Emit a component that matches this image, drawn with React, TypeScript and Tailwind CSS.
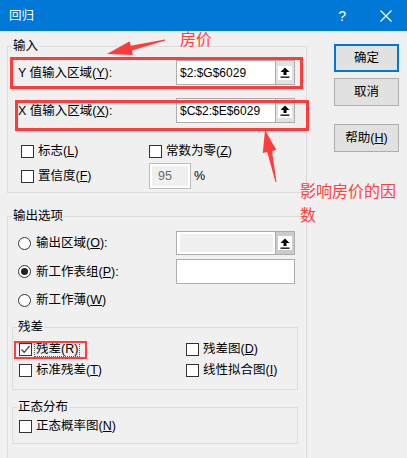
import { ReactNode } from "react";

const font = "font-['Liberation_Sans','Noto_Sans_CJK_SC',sans-serif]";

function UpArrow() {
    return (
        <div className="w-[14px] h-[14px] bg-white flex items-center justify-center">
            <svg width="10" height="11" viewBox="0 0 10 11">
                <path d="M5 0.5 L9.5 5 L6.5 5 L6.5 8 L3.5 8 L3.5 5 L0.5 5 Z" fill="#000" />
                <rect x="0.5" y="9.5" width="9" height="1.3" fill="#000" />
            </svg>
        </div>
    );
}

function RefInput({ value, disabled }: { value?: string; disabled?: boolean }) {
    return (
        <div className="flex w-[119px] h-full border border-[#adadad] bg-white">
            <div className="flex-1 flex items-center pl-[3px] p-[2px]">
                {disabled ? (
                    <div className="w-full h-full bg-[#f0f0f0]" />
                ) : (
                    <span className="text-[12px] text-black">{value}</span>
                )}
            </div>
            <div className={`w-[19px] h-full flex items-center justify-center border-l border-[#adadad] ${disabled ? "bg-[#cccccc]" : "bg-[#e1e1e1]"}`}>
                <UpArrow />
            </div>
        </div>
    );
}

function Check({ checked }: { checked?: boolean }) {
    return (
        <div className="w-[13px] h-[13px] border border-[#333] bg-white flex items-center justify-center shrink-0">
            {checked && (
                <svg width="11" height="11" viewBox="0 0 11 11">
                    <path d="M1.5 5.5 L4.2 8.3 L9.5 2" stroke="#444" strokeWidth="1.3" fill="none" />
                </svg>
            )}
        </div>
    );
}

function Radio({ checked }: { checked?: boolean }) {
    return (
        <div className="w-[13px] h-[13px] rounded-full border border-[#333] bg-white flex items-center justify-center shrink-0">
            {checked && <div className="w-[7px] h-[7px] rounded-full bg-[#222]" />}
        </div>
    );
}

function Group({ label, className, children }: { label: string; className: string; children: ReactNode }) {
    return (
        <div className={`relative border border-[#dcdcdc] ${className}`}>
            <span className="absolute -top-[9px] left-[4px] px-[1px] bg-[#f0f0f0] leading-[16px]">{label}</span>
            {children}
        </div>
    );
}

function Btn({ children, primary }: { children: ReactNode; primary?: boolean }) {
    return (
        <div className={`w-[65px] h-[28px] flex items-center justify-center bg-[#e1e1e1] ${primary ? "border-2 border-[#0078d7]" : "border border-[#adadad]"}`}>
            {children}
        </div>
    );
}

export default function App() {
    return (
        <div className={`relative w-[407px] h-[458px] overflow-hidden bg-[#f0f0f0] text-[12.5px] leading-[16px] text-black ${font}`}>
            <div className="h-[31px] bg-[#0078d7] flex items-center text-white">
                <span className="pl-[9px] text-[12.5px]">回归</span>
                <span className="ml-auto mr-[34px] text-[14px]">?</span>
                <svg className="mr-[15px]" width="12" height="12" viewBox="0 0 12 12">
                    <path d="M0.5 0.5 L11.5 11.5 M11.5 0.5 L0.5 11.5" stroke="#fff" strokeWidth="1.2" />
                </svg>
            </div>

            <div className="flex pl-[7px]">
                <div className="w-[300px] flex flex-col">
                    <Group label="输入" className="mt-[15px] h-[147px]">
                        <div className="flex items-center h-[25px] mt-[13px] pl-[10px]">
                            <span className="w-[158px]">Y 值输入区域(<u>Y</u>):</span>
                            <RefInput value="$2:$G$6029" />
                        </div>
                        <div className="flex items-center h-[25px] mt-[13px] pl-[10px]">
                            <span className="w-[158px]">X 值输入区域(<u>X</u>):</span>
                            <RefInput value="$C$2:$E$6029" />
                        </div>
                        <div className="flex items-center h-[16px] mt-[20px] pl-[13px]">
                            <div className="w-[128px] flex items-center gap-[4px]">
                                <Check />
                                <span>标志(<u>L</u>)</span>
                            </div>
                            <div className="flex items-center gap-[4px]">
                                <Check />
                                <span>常数为零(<u>Z</u>)</span>
                            </div>
                        </div>
                        <div className="flex items-center h-[26px] mt-[4px] pl-[13px]">
                            <div className="w-[128px] flex items-center gap-[4px]">
                                <Check />
                                <span>置信度(<u>F</u>)</span>
                            </div>
                            <div className="w-[42px] h-[26px] border border-[#bcbcbc] bg-white p-[2px]">
                                <div className="w-full h-full bg-[#f0f0f0] text-[#6d6d6d] pl-[6px] flex items-center">95</div>
                            </div>
                            <span className="ml-[3px]">%</span>
                        </div>
                    </Group>

                    <Group label="输出选项" className="mt-[23px] h-[260px]">
                        <div className="flex items-center h-[24px] mt-[14px] pl-[10px]">
                            <div className="w-[158px] flex items-center gap-[5px]">
                                <Radio />
                                <span>输出区域(<u>O</u>):</span>
                            </div>
                            <RefInput disabled />
                        </div>
                        <div className="flex items-center h-[25px] mt-[4px] pl-[10px]">
                            <div className="w-[158px] flex items-center gap-[5px]">
                                <Radio checked />
                                <span>新工作表组(<u>P</u>):</span>
                            </div>
                            <div className="w-[119px] h-full border border-[#adadad] bg-white" />
                        </div>
                        <div className="flex items-center h-[16px] mt-[8px] pl-[10px] gap-[5px]">
                            <Radio />
                            <span>新工作薄(<u>W</u>)</span>
                        </div>

                        <Group label="残差" className="ml-[4px] w-[286px] h-[63px] mt-[19px]">
                            <div className="flex items-center h-[16px] mt-[13px] pl-[6px]">
                                <div className="w-[167px] flex items-center gap-[2px]">
                                    <Check checked />
                                    <span className="border border-dotted border-[#555] px-[1px] leading-[14px]">残差(R)</span>
                                </div>
                                <div className="flex items-center gap-[4px]">
                                    <Check />
                                    <span>残差图(<u>D</u>)</span>
                                </div>
                            </div>
                            <div className="flex items-center h-[16px] mt-[5px] pl-[6px]">
                                <div className="w-[167px] flex items-center gap-[4px]">
                                    <Check />
                                    <span>标准残差(<u>T</u>)</span>
                                </div>
                                <div className="flex items-center gap-[4px]">
                                    <Check />
                                    <span>线性拟合图(<u>I</u>)</span>
                                </div>
                            </div>
                        </Group>

                        <Group label="正态分布" className="ml-[4px] w-[286px] h-[37px] mt-[17px]">
                            <div className="flex items-center h-[16px] mt-[10px] pl-[6px] gap-[4px]">
                                <Check />
                                <span>正态概率图(<u>N</u>)</span>
                            </div>
                        </Group>
                    </Group>
                </div>

                <div className="ml-[27px] flex flex-col">
                    <div className="mt-[13px]"><Btn primary>确定</Btn></div>
                    <div className="mt-[6px]"><Btn>取消</Btn></div>
                    <div className="mt-[18px]"><Btn>帮助(<u>H</u>)</Btn></div>
                </div>
            </div>

            {/* red annotations */}
            <div className="absolute left-[10px] top-[57px] w-[293px] h-[32px] border-[3px] border-[#ff3b3b]" />
            <div className="absolute left-[15px] top-[100px] w-[294px] h-[31px] border-[3px] border-[#ff3b3b]" />
            <div className="absolute left-[14px] top-[341px] w-[73px] h-[18px] border-[2px] border-[#ff3b3b]" />
            <span className="absolute left-[180px] top-[30px] text-[16px] leading-[20px] text-[#ff4040]">房价</span>
            <span className="absolute left-[300px] top-[180px] w-[100px] text-[16px] leading-[24px] text-[#ff4040]">影响房价的因数</span>
            <svg className="absolute left-0 top-0" width="407" height="458" viewBox="0 0 407 458">
                <polygon points="107,54 129.7,41.3 130.7,45.7 164.8,39.5 165.2,40.5 131.9,50.5 132.9,54.9" fill="#ff3b3b" />
                <polygon points="265,130 276.4,150.1 272,151 276.5,182 275.5,182 267.2,152 262.8,152.9" fill="#ff3b3b" />
            </svg>
        </div>
    );
}
